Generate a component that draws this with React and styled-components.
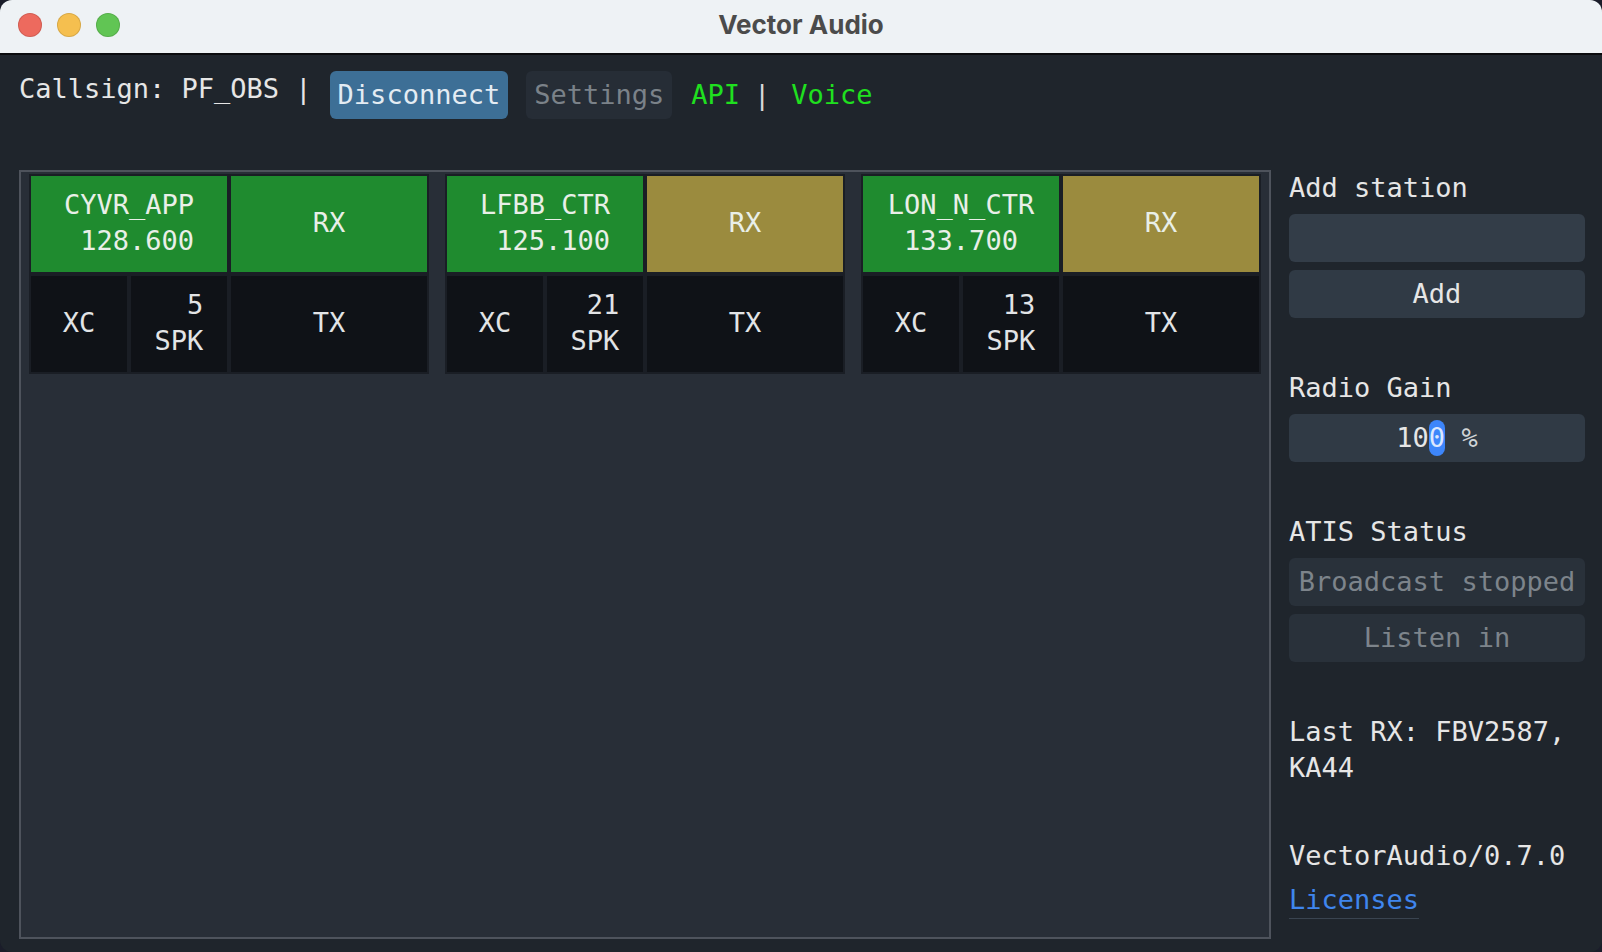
import React from 'react';
import styled, { createGlobalStyle } from 'styled-components';

const GlobalStyle = createGlobalStyle`
  html, body {
    margin: 0;
    padding: 0;
    background: #1b1d2a;
    overflow: hidden;
  }
  * {
    box-sizing: border-box;
  }
`;

const MONO = `"DejaVu Sans Mono", "Liberation Mono", monospace`;

const Window = styled.div`
  width: 1602px;
  height: 952px;
  display: flex;
  flex-direction: column;
  border-radius: 12px;
  overflow: hidden;
  background: #1f252c;
  font-family: ${MONO};
  font-size: 27px;
  line-height: 36px;
  color: #e6e6e6;
`;

const TitleBar = styled.div`
  position: relative;
  height: 55px;
  flex: none;
  display: flex;
  align-items: center;
  justify-content: center;
  background: #eef2f5;
  border-bottom: 2px solid #0b0c0e;
`;

const Lights = styled.div`
  position: absolute;
  left: 18px;
  top: 13px;
  display: flex;
  gap: 15px;
`;

const Light = styled.span`
  width: 24px;
  height: 24px;
  border-radius: 50%;
  background: ${(p) => p.color};
  box-shadow: inset 0 0 0 1px rgba(0, 0, 0, 0.12);
`;

const Title = styled.div`
  font-family: Inter, "Open Sans", sans-serif;
  font-weight: 700;
  font-size: 26px;
  color: #4b4b4b;
  margin-top: -4px;
`;

const Body = styled.div`
  flex: 1;
  display: flex;
  flex-direction: column;
  padding: 16px 17px 13px 19px;
  min-height: 0;
`;

const TopBar = styled.div`
  display: flex;
  align-items: flex-start;
  gap: 18px;
  height: 48px;
`;

const PlainText = styled.span`
  white-space: pre;
  color: ${(p) => p.color || '#e6e6e6'};
  margin-left: ${(p) => p.offset || 0}px;
`;

const Button = styled.div`
  height: 48px;
  padding: 6px 8px;
  border-radius: 6px;
  white-space: pre;
  background: ${(p) => (p.primary ? '#3d6f96' : '#262d36')};
  color: ${(p) => (p.primary ? '#e4ecf3' : '#7b8289')};
`;

const LinkRow = styled.div`
  display: flex;
  padding-top: 6px;
  margin-left: 1px;
`;

const Main = styled.div`
  flex: 1;
  display: flex;
  gap: 18px;
  margin-top: 51px;
  min-height: 0;
`;

const ChannelPanel = styled.div`
  flex: 1;
  border: 2px solid #4e535c;
  background: #282e37;
  padding: 2px 8px;
  display: grid;
  grid-template-columns: repeat(3, 1fr);
  column-gap: 16px;
  align-content: start;
`;

const Card = styled.div`
  background: #1a1e25;
  padding: 2px;
  display: grid;
  grid-template-columns: 1fr 1fr;
  grid-template-rows: 96px 96px;
  gap: 4px;
`;

const SplitCell = styled.div`
  display: grid;
  grid-template-columns: 1fr 1fr;
  gap: 4px;
`;

const toneColors = {
  green: '#1f8b2f',
  olive: '#9b8b3e',
  dark: '#0f1217',
};

const Cell = styled.div`
  display: flex;
  align-items: center;
  justify-content: center;
  padding-bottom: 3px;
  background: ${(p) => toneColors[p.tone]};
  color: ${(p) => (p.tone === 'dark' ? '#e2e4e6' : '#e9efe8')};
`;

const Block = styled.span`
  white-space: pre;
  text-align: left;
`;

const Sidebar = styled.div`
  width: 296px;
  flex: none;
  display: flex;
  flex-direction: column;
  gap: 52px;
`;

const Section = styled.div`
  display: flex;
  flex-direction: column;
  gap: 8px;
`;

const Label = styled.div`
  white-space: pre;
  color: #e6e6e6;
`;

const Field = styled.div`
  height: 48px;
  padding: 6px 8px;
  border-radius: 6px;
  white-space: pre;
  text-align: center;
  background: ${(p) => (p.disabled ? '#29313a' : p.input ? '#333d48' : '#303a45')};
  color: ${(p) => (p.disabled ? '#7d848b' : '#e6e6e6')};
`;

const Caret = styled.span`
  background: #3d86fb;
  border-radius: 9px;
  padding: 2px 0 3px;
  color: #dbe7ff;
`;

const Percent = styled.span`
  color: #cfd3d6;
`;

const LinkText = styled.span`
  align-self: flex-start;
  color: #3f86ee;
  border-bottom: 1px solid #3a4450;
  white-space: pre;
`;

const stations = [
  { name: 'CYVR_APP', freq: '128.600', count: 5, rx: 'green' },
  { name: 'LFBB_CTR', freq: '125.100', count: 21, rx: 'olive' },
  { name: 'LON_N_CTR', freq: '133.700', count: 13, rx: 'olive' },
];

function StationCard({ name, freq, count, rx }) {
  return (
    <Card>
      <Cell tone="green">
        <Block>{`${name}\n ${freq}`}</Block>
      </Cell>
      <Cell tone={rx}>RX</Cell>
      <SplitCell>
        <Cell tone="dark">XC</Cell>
        <Cell tone="dark">
          <Block>{`${String(count).padStart(3, ' ')}\nSPK`}</Block>
        </Cell>
      </SplitCell>
      <Cell tone="dark">TX</Cell>
    </Card>
  );
}

export default function App() {
  return (
    <>
      <GlobalStyle />
      <Window>
        <TitleBar>
          <Lights>
            <Light color="#ed6a5e" />
            <Light color="#f5bf4f" />
            <Light color="#61c554" />
          </Lights>
          <Title>Vector Audio</Title>
        </TitleBar>
        <Body>
          <TopBar>
            <PlainText>Callsign: PF_OBS |</PlainText>
            <Button primary>Disconnect</Button>
            <Button>Settings</Button>
            <LinkRow>
              <PlainText color="#1fe01f">API</PlainText>
              <PlainText color="#d8d8d8" offset={14}>|</PlainText>
              <PlainText color="#1fe01f" offset={21}>Voice</PlainText>
            </LinkRow>
          </TopBar>
          <Main>
            <ChannelPanel>
              {stations.map((s) => (
                <StationCard key={s.name} {...s} />
              ))}
            </ChannelPanel>
            <Sidebar>
              <Section>
                <Label>Add station</Label>
                <Field input />
                <Field>Add</Field>
              </Section>
              <Section>
                <Label>Radio Gain</Label>
                <Field>
                  10<Caret>0</Caret>
                  <Percent> %</Percent>
                </Field>
              </Section>
              <Section>
                <Label>ATIS Status</Label>
                <Field disabled>Broadcast stopped</Field>
                <Field disabled>Listen in</Field>
              </Section>
              <Section>
                <Label>{'Last RX: FBV2587,\nKA44'}</Label>
              </Section>
              <Section>
                <Label>VectorAudio/0.7.0</Label>
                <LinkText>Licenses</LinkText>
              </Section>
            </Sidebar>
          </Main>
        </Body>
      </Window>
    </>
  );
}
